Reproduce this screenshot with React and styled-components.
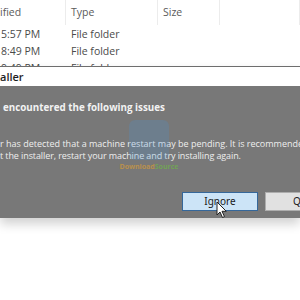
import React from "react"
import styled, { createGlobalStyle } from "styled-components"

const GlobalStyle = createGlobalStyle`
  html, body {
    margin: 0;
    padding: 0;
    background: #ffffff;
  }
  body {
    width: 300px;
    height: 300px;
    overflow: hidden;
    font-family: "Open Sans", "Noto Sans", sans-serif;
  }
`

const columns = [
  { label: "ified", width: 66 },
  { label: "Type", width: 92 },
  { label: "Size", width: 62 },
]

const rows = [
  { time: "5:57 PM", type: "File folder" },
  { time: "8:49 PM", type: "File folder" },
  { time: "9:49 PM", type: "File folder" },
]

const Cursor = () => (
  <CursorWrap>
    <svg width="12" height="18" viewBox="0 0 12 18">
      <path
        d="M1 1 L1 14 L4 11 L6.5 16.5 L8.5 15.6 L6 10.3 L10.3 10.3 Z"
        fill="#ffffff"
        stroke="#222"
        strokeWidth="1"
        strokeLinejoin="round"
      />
    </svg>
  </CursorWrap>
)

const App = () => {
  return (
    <Screen>
      <GlobalStyle />

      {/* Explorer behind the dialog */}
      <Explorer>
        <HeaderRow>
          {columns.map((c) => (
            <HeaderCell key={c.label} width={c.width}>
              {c.label}
            </HeaderCell>
          ))}
          <HeaderCell width={80} />
        </HeaderRow>
        {rows.map((r) => (
          <FileRow key={r.time}>
            <Cell width={66}>{r.time}</Cell>
            <Cell width={92} $pad>
              {r.type}
            </Cell>
          </FileRow>
        ))}
      </Explorer>

      {/* Dialog */}
      <Dialog>
        <TitleBar>aller</TitleBar>
        <Body>
          <Heading>encountered the following issues</Heading>
          <Message>
            <span>r has detected that a machine restart may be pending. It is recommended</span>
            <span>t the installer, restart your machine and try installing again.</span>
          </Message>
          <Watermark>
            <WatermarkLogo />
            <WatermarkText>
              <span>Download</span>
              <em>Source</em>
            </WatermarkText>
          </Watermark>
          <ButtonRow>
            <Button $primary>
              Ignore
              <Cursor />
            </Button>
            <Button>Quit</Button>
          </ButtonRow>
        </Body>
      </Dialog>

      <Backdrop />
    </Screen>
  )
}

const Screen = styled.div`
  width: 300px;
  height: 300px;
  display: flex;
  flex-direction: column;
  background: #ffffff;
  overflow: hidden;
`

const Explorer = styled.div`
  height: 66px;
  overflow: hidden;
  color: #4a4a4a;
  font-size: 10.5px;
  flex-shrink: 0;
`

const HeaderRow = styled.div`
  display: flex;
  height: 25px;
  align-items: center;
`

const HeaderCell = styled.div`
  width: ${(p) => p.width}px;
  height: 25px;
  line-height: 25px;
  box-sizing: border-box;
  padding-left: 5px;
  border-right: 1px solid #ececec;
  color: #5a5a5a;
  white-space: nowrap;
  &:first-child {
    padding-left: 0;
  }
`

const FileRow = styled.div`
  display: flex;
  height: 17px;
  align-items: center;
  &:first-of-type {
    margin-top: 1px;
  }
`

const Cell = styled.div`
  width: ${(p) => p.width}px;
  box-sizing: border-box;
  padding-left: ${(p) => (p.$pad ? "5px" : "1px")};
  white-space: nowrap;
`

const Dialog = styled.div`
  display: flex;
  flex-direction: column;
  flex-shrink: 0;
  border-top: 1px solid #6e6e6e;
  box-shadow: 0 6px 10px rgba(0, 0, 0, 0.18);
  position: relative;
  z-index: 1;
`

const TitleBar = styled.div`
  height: 19px;
  line-height: 19px;
  background: #ffffff;
  color: #1e1e1e;
  font-weight: 600;
  font-size: 11px;
`

const Body = styled.div`
  height: 132px;
  background: #787878;
  box-sizing: border-box;
  padding: 14px 0 0 3px;
  display: flex;
  flex-direction: column;
  position: relative;
`

const Heading = styled.div`
  color: #f2f2f2;
  font-weight: 700;
  font-size: 9.8px;
  line-height: 16px;
  white-space: nowrap;
`

const Message = styled.div`
  margin-top: 22px;
  margin-left: -3px;
  color: #eeeeee;
  font-size: 9px;
  line-height: 12px;
  white-space: nowrap;
  display: flex;
  flex-direction: column;
  span:last-child {
    letter-spacing: -0.1px;
  }
`

const Watermark = styled.div`
  position: absolute;
  left: 118px;
  top: 34px;
  width: 62px;
  display: flex;
  flex-direction: column;
  align-items: center;
  opacity: 0.6;
`

const WatermarkLogo = styled.div`
  width: 40px;
  height: 40px;
  border-radius: 6px;
  background: rgba(70, 150, 220, 0.35);
`

const WatermarkText = styled.div`
  font-size: 7px;
  font-weight: 700;
  margin-top: 2px;
  white-space: nowrap;
  span {
    color: #e0a030;
  }
  em {
    font-style: normal;
    color: #6fbf40;
  }
`

const ButtonRow = styled.div`
  margin-top: auto;
  margin-bottom: 7px;
  margin-left: 179px;
  display: flex;
  gap: 7px;
`

const Button = styled.div`
  position: relative;
  flex-shrink: 0;
  width: 76px;
  height: 19px;
  box-sizing: border-box;
  background: ${(p) => (p.$primary ? "#cce4f7" : "#e1e1e1")};
  border: 1px solid ${(p) => (p.$primary ? "#35679a" : "#adadad")};
  color: #1a1a1a;
  font-size: 10px;
  line-height: 17px;
  text-align: center;
  font-family: "Noto Sans", sans-serif;
`

const CursorWrap = styled.div`
  position: absolute;
  left: 33px;
  top: 8px;
  line-height: 0;
`

const Backdrop = styled.div`
  flex: 1;
  background: #ffffff;
`

export default App
